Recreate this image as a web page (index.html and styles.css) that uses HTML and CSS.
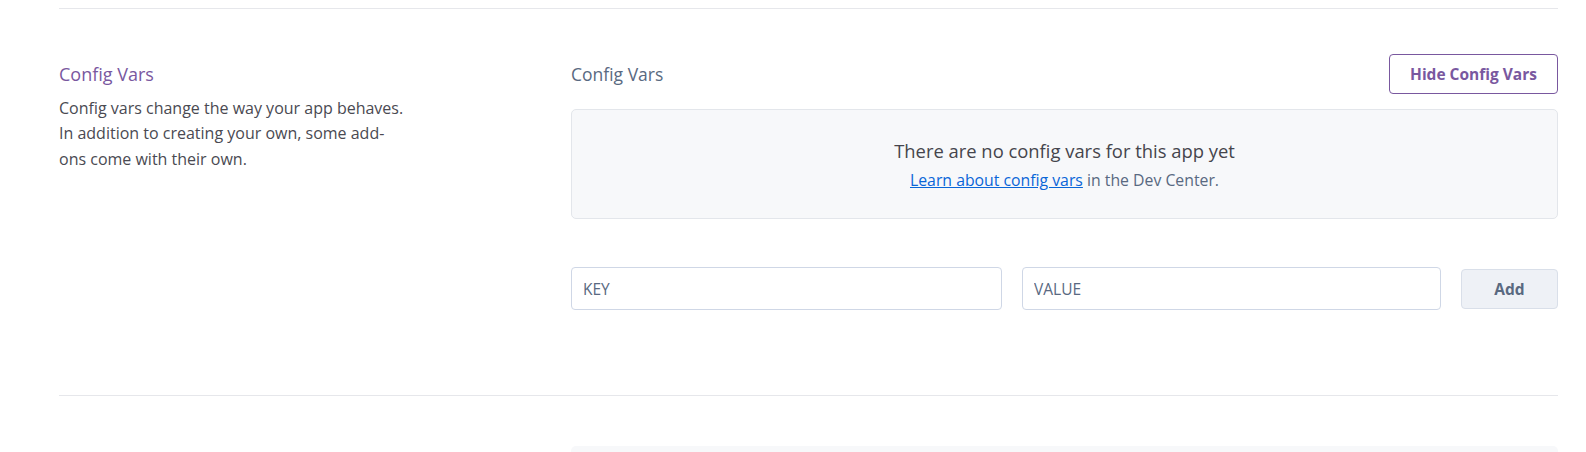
FILE: index.html
```html
<!DOCTYPE html>
<html>
<head>
<meta charset="utf-8">
<link rel="stylesheet" href="styles.css">
</head>
<body>
<div class="page">
  <section class="settings-section">
    <div class="section-info">
      <h2 class="section-title">Config Vars</h2>
      <p class="section-desc">Config vars change the way your app behaves. In addition to creating your own, some add-ons come with their own.</p>
    </div>
    <div class="section-body">
      <div class="body-header">
        <h3 class="body-title">Config Vars</h3>
        <button class="btn-outline">Hide Config Vars</button>
      </div>
      <div class="empty-box">
        <div class="empty-title">There are no config vars for this app yet</div>
        <div class="empty-sub"><a href="#" class="link">Learn about config vars</a> in the Dev Center.</div>
      </div>
      <div class="var-form">
        <input class="field field-key" placeholder="KEY">
        <input class="field field-value" placeholder="VALUE">
        <button class="btn-add">Add</button>
      </div>
    </div>
  </section>
  <section class="settings-section next">
    <div class="section-info"></div>
    <div class="section-body">
      <div class="next-box"></div>
    </div>
  </section>
</div>
</body>
</html>
```
FILE: styles.css
```css
* { box-sizing: border-box; }
html, body { margin: 0; padding: 0; background: #fff; }
body {
  font-family: "Open Sans", "Noto Sans", sans-serif;
  color: #3f3f44;
  overflow: hidden;
  height: 452px;
}
.page {
  padding: 8px 28px 0 59px;
}
.settings-section {
  border-top: 1px solid #e6e7eb;
  display: grid;
  grid-template-columns: 512px 1fr;
  padding: 45px 0 85px;
}
.settings-section.next {
  padding-top: 50px;
  padding-bottom: 0;
}
.section-title {
  margin: 0;
  font-size: 18px;
  font-weight: 400;
  line-height: 40px;
  color: #79589f;
}
.section-desc {
  margin: 2px 0 0;
  width: 352px;
  font-size: 16px;
  line-height: 25.3px;
  color: #4a4a52;
}
.body-header {
  display: flex;
  align-items: center;
  justify-content: space-between;
  height: 40px;
}
.body-title {
  margin: 0;
  font-size: 17.5px;
  font-weight: 400;
  color: #596981;
}
.btn-outline {
  height: 40px;
  width: 169px;
  border: 1px solid #79589f;
  border-radius: 4px;
  background: #fff;
  color: #79589f;
  font-family: inherit;
  font-size: 15.5px;
  font-weight: 700;
  cursor: pointer;
}
.empty-box {
  margin-top: 15px;
  height: 110px;
  background: #f7f8fa;
  border: 1px solid #e3e6eb;
  border-radius: 5px;
  display: flex;
  flex-direction: column;
  align-items: center;
  justify-content: center;
}
.empty-title {
  font-size: 18.4px;
  color: #45454c;
  line-height: 26px;
  margin-top: 0;
}
.empty-sub {
  font-size: 15.8px;
  color: #596981;
  line-height: 22px;
  margin-top: 5px;
}
.link {
  color: #0a66d8;
  text-decoration: underline;
}
.var-form {
  margin-top: 48px;
  display: flex;
  align-items: center;
  gap: 20px;
}
.field {
  height: 43px;
  border: 1px solid #cfd7e6;
  border-radius: 4px;
  padding: 0 11px;
  font-family: inherit;
  font-size: 15.5px;
  color: #3f3f44;
  background: #fff;
  outline: none;
}
.field::placeholder { color: #596981; }
.field-key { width: 431px; }
.field-value { flex: 1; min-width: 0; }
.btn-add {
  width: 97px;
  height: 40px;
  border: 1px solid #d9dfe9;
  border-radius: 4px;
  background: #eef1f6;
  color: #596981;
  font-family: inherit;
  font-size: 15.5px;
  font-weight: 700;
  cursor: pointer;
}
.next-box {
  height: 40px;
  background: #f7f8fa;
  border-radius: 5px 5px 0 0;
}
```
